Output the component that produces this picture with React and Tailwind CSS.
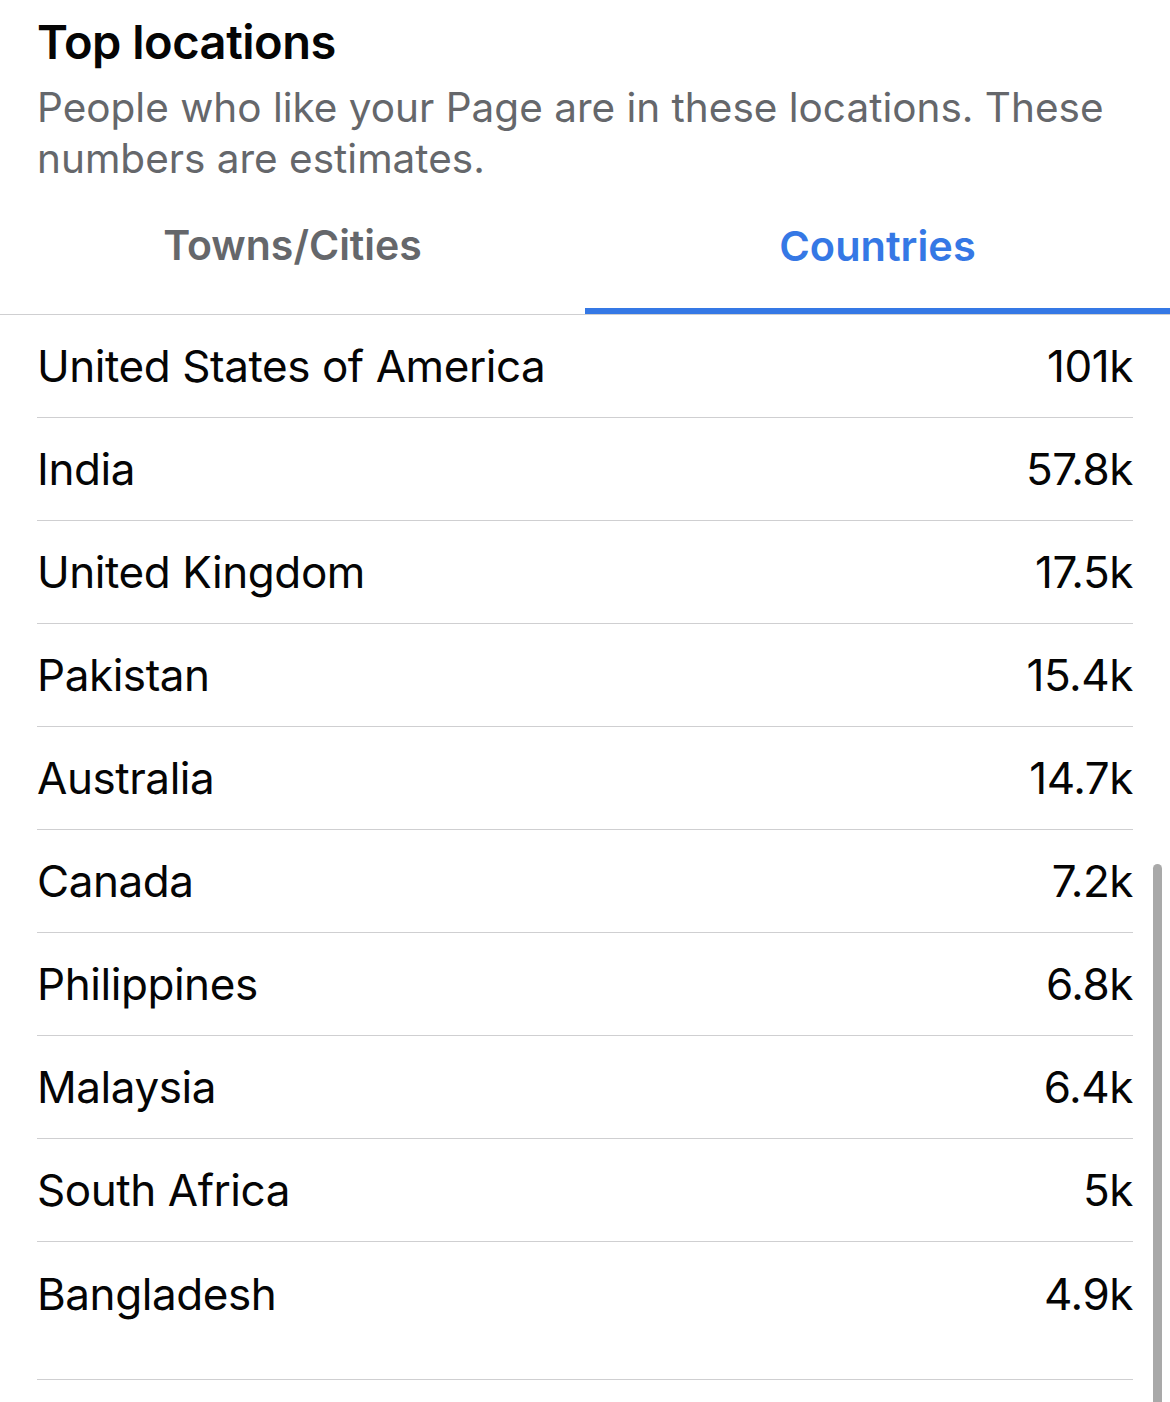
import React from 'react';

const countries = [
  { name: 'United States of America', value: '101k' },
  { name: 'India', value: '57.8k' },
  { name: 'United Kingdom', value: '17.5k' },
  { name: 'Pakistan', value: '15.4k' },
  { name: 'Australia', value: '14.7k' },
  { name: 'Canada', value: '7.2k' },
  { name: 'Philippines', value: '6.8k' },
  { name: 'Malaysia', value: '6.4k' },
  { name: 'South Africa', value: '5k' },
  { name: 'Bangladesh', value: '4.9k' },
];

export default function App() {
  return (
    <div className="relative w-[1170px] h-[1402px] overflow-hidden bg-white font-['Inter','Liberation_Sans',sans-serif] text-[#050505]">
      {/* Header */}
      <div className="px-[37px] pt-[14px]">
        <h2 className="text-[47px] leading-[56px] font-semibold tracking-[-0.01em]">Top locations</h2>
        <p className="mt-[12px] text-[40.5px] leading-[51px] text-[#65676b]">
          People who like your Page are in these locations. These numbers are estimates.
        </p>
      </div>

      {/* Tabs */}
      <div className="flex border-b border-[#cfcfd1]">
        <button className="w-1/2 flex flex-col">
          <span className="h-[124px] flex items-center justify-center text-[41px] font-semibold text-[#65676b]">
            Towns/Cities
          </span>
          <span className="h-[6px]" />
        </button>
        <button className="w-1/2 flex flex-col">
          <span className="h-[124px] flex items-center justify-center text-[41.5px] font-semibold text-[#3578e5]">
            Countries
          </span>
          <span className="h-[6px] bg-[#3578e5]" />
        </button>
      </div>

      {/* Country list */}
      <div className="px-[37px]">
        {countries.map((c, i) => (
          <div
            key={c.name}
            className={`h-[103px] flex items-center justify-between text-[44px] tracking-[-0.01em] ${
              i < countries.length - 1 ? 'border-b border-[#cfcfd1]' : ''
            }`}
          >
            <span>{c.name}</span>
            <span>{c.value}</span>
          </div>
        ))}
        <div className="h-[35px] border-b border-[#cfcfd1]" />
      </div>

      {/* Scroll indicator */}
      <div className="absolute left-[1153px] top-[864px] w-[9px] h-[560px] rounded-full bg-[#a9a9a9]" />
    </div>
  );
}
